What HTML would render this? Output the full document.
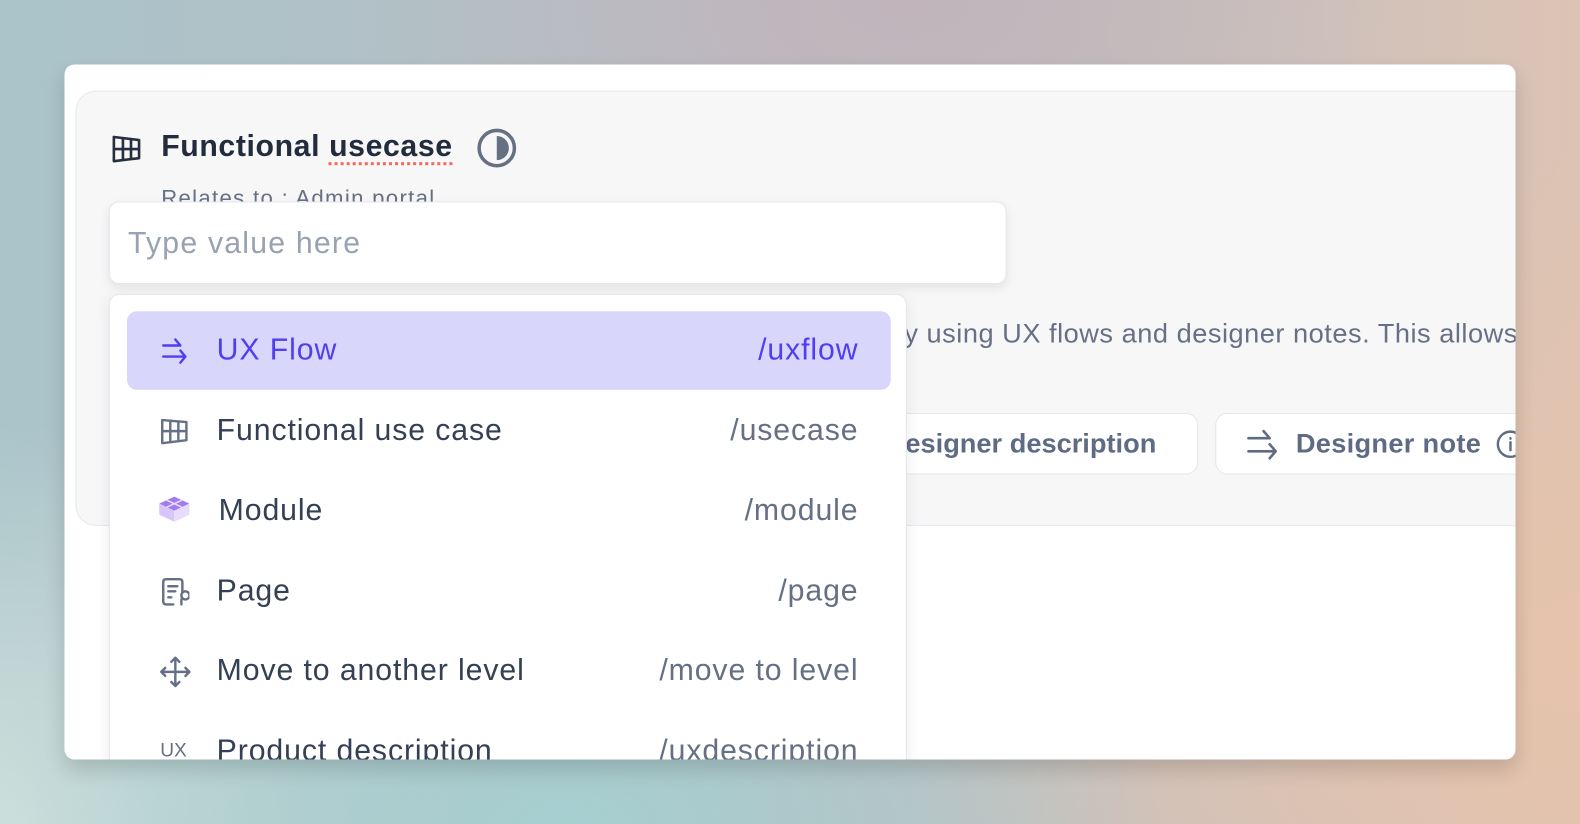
<!DOCTYPE html>
<html><head><meta charset="utf-8"><style>
html,body{margin:0;padding:0;width:1580px;height:824px;overflow:hidden;font-family:"Liberation Sans",sans-serif}
#w{position:absolute;left:0;top:0;width:1568px;height:818px;transform-origin:0 0;transform:scale(1.00765,1.00733);overflow:hidden;
background:
radial-gradient(ellipse 600px 300px at 560px 818px,#a6cfd0 0%,rgba(166,207,208,0) 100%),
radial-gradient(ellipse 700px 500px at 1568px 650px,#e6c3ab 0%,rgba(230,195,171,0) 100%),
radial-gradient(ellipse 500px 400px at 0px 818px,#cfe0dc 0%,rgba(207,224,220,0) 100%),
radial-gradient(ellipse 500px 300px at 900px 0px,#c1b4bb 0%,rgba(193,180,187,0) 100%),
linear-gradient(90deg,#aac4ca 0%,#b9bdc3 50%,#cdc2bc 80%,#dcc3b4 100%);}
.card{position:absolute;left:64px;top:64px;width:1440px;height:690px;background:#fff;border-radius:10px;overflow:hidden;box-shadow:0 10px 20px rgba(0,0,0,.15)}
.panel{position:absolute;left:11px;top:26px;width:1460px;height:430px;background:#f7f7f8;border:1.5px solid #e4e7ec;border-radius:20px 0 0 20px}
.abs{position:absolute;white-space:nowrap}
.row{position:absolute;left:17px;width:758px;height:78px}
.row .t{position:absolute;left:89px;top:0;line-height:78px;font-size:30px;color:#344054;letter-spacing:0.9px}
.row .s{position:absolute;right:32px;top:0;line-height:78px;font-size:30px;color:#667085;letter-spacing:0.9px}
.row svg{position:absolute;left:32px;top:24px}
</style></head><body><div id="w">
<div class="card">
 <div class="panel"></div>
 <svg class="abs" style="left:46px;top:68px" width="32" height="32" viewBox="0 0 32 32" fill="none" stroke="#262f40" stroke-width="2.6" stroke-linejoin="round"><path d="M3 4 L28 7 L28 25 L3 28 Z M12 5 L12 27 M20 6 L20 26 M3 16 L28 16"/></svg>
 <div class="abs" style="left:96px;top:62px;font-size:30px;font-weight:bold;color:#232c3d;line-height:40px;letter-spacing:0.6px">Functional <span style="text-decoration:underline dotted #f26b5b 3px;text-underline-offset:6px">usecase</span></div>
 <svg class="abs" style="left:409px;top:63px" width="40" height="40" viewBox="0 0 40 40"><circle cx="20" cy="20" r="17.5" fill="none" stroke="#667085" stroke-width="3.5"/><path d="M20 8 A12 12 0 0 1 20 32 Z" fill="#667085"/></svg>
 <div class="abs" style="left:96px;top:120px;font-size:22px;color:#667085;letter-spacing:1.3px">Relates to : Admin portal</div>
 <div class="abs" style="left:818px;top:252px;font-size:27px;color:#667085;letter-spacing:0.5px">by using UX flows and designer notes. This allows</div>
 <div class="abs" style="left:700px;top:346px;width:423px;height:59px;border:1.5px solid #e4e7ec;border-radius:12px;background:#fff"></div>
 <div class="abs" style="left:815px;top:358px;font-size:27px;color:#5f6b85;font-weight:bold;line-height:36px">Designer description</div>
 <div class="abs" style="left:1142px;top:346px;width:340px;height:59px;border:1.5px solid #e4e7ec;border-radius:12px;background:#fff"></div>
 <svg class="abs" style="left:1172px;top:360px" width="34" height="34" viewBox="0 0 34 34" fill="none" stroke="#5f6b85" stroke-width="2.6" stroke-linecap="round" stroke-linejoin="round"><path d="M3 11 H24 M18 4 L24 11 M3 24 H30 M24 17 L30 24 L24 31"/></svg>
 <div class="abs" style="left:1222px;top:358px;font-size:27px;color:#5f6b85;font-weight:bold;line-height:36px;letter-spacing:0.3px">Designer note</div>
 <svg class="abs" style="left:1420px;top:362px" width="30" height="30" viewBox="0 0 30 30" fill="none" stroke="#5f6b85" stroke-width="2.4"><circle cx="15" cy="15" r="12.5"/><path d="M15 13 V21 M15 9 V9.5" stroke-linecap="round"/></svg>
 <div class="abs" style="left:44px;top:136px;width:889px;height:80px;background:#fff;border:1.5px solid #e4e7ec;border-radius:10px;box-shadow:0 4px 10px rgba(0,0,0,.08)"></div>
 <div class="abs" style="left:63px;top:158px;font-size:30px;color:#98a2b3;line-height:40px;letter-spacing:1.2px">Type value here</div>
 <div class="abs" style="left:44px;top:228px;width:790px;height:500px;background:#fff;border:1.5px solid #e4e7ec;border-radius:10px;box-shadow:0 4px 14px rgba(0,0,0,.08)">
  <div class="row" style="top:16px;background:#d9d6fb;border-radius:10px">
   <svg width="30" height="30" viewBox="0 0 30 30" fill="none" stroke="#4f3ff0" stroke-width="2.4" stroke-linecap="round" stroke-linejoin="round"><path d="M4 10 H21 M16 4 L21 10 M4 21 H26 M21 15 L26 21 L21 27"/></svg>
   <div class="t" style="color:#4f3ff0">UX Flow</div><div class="s" style="color:#4f3ff0">/uxflow</div></div>
  <div class="row" style="top:96px">
   <svg width="30" height="30" viewBox="0 0 30 30" fill="none" stroke="#667085" stroke-width="2.4" stroke-linejoin="round"><path d="M3 4 L27 6 L27 24 L3 27 Z M11 5 L11 26 M19 5.5 L19 25 M3 15 L27 15"/></svg>
   <div class="t">Functional use case</div><div class="s">/usecase</div></div>
  <div class="row" style="top:175px">
   <svg width="34" height="30" viewBox="0 0 34 30" style="left:30px;top:22px"><path d="M17 3 L32 10 L17 17 L2 10 Z" fill="#a37bf0"/><path d="M2 10 L17 17 L17 28 L2 21 Z" fill="#d7c6fb"/><path d="M32 10 L17 17 L17 28 L32 21 Z" fill="#e7dcfd"/><path d="M9.5 6.5 L24.5 13.5 M24.5 6.5 L9.5 13.5" stroke="#e8dcff" stroke-width="1.5"/></svg>
   <div class="t" style="left:91px">Module</div><div class="s">/module</div></div>
  <div class="row" style="top:255px">
   <svg width="30" height="32" viewBox="0 0 30 32" fill="none" stroke="#667085" stroke-width="2.4" stroke-linecap="round" stroke-linejoin="round"><path d="M14 28 H7 Q4 28 4 25 V6 Q4 3 7 3 H20 Q23 3 23 6 V16 M9 10 H18 M9 15 H16 M9 21 H12"/><path d="M22 19 a4 4 0 1 1 0 .1 M22 28 L22 23" /></svg>
   <div class="t">Page</div><div class="s">/page</div></div>
  <div class="row" style="top:334px">
   <svg width="32" height="32" viewBox="0 0 32 32" fill="none" stroke="#667085" stroke-width="2.4" stroke-linecap="round" stroke-linejoin="round"><path d="M16 2 V30 M2 16 H30 M12 6 L16 2 L20 6 M12 26 L16 30 L20 26 M6 12 L2 16 L6 20 M26 12 L30 16 L26 20"/></svg>
   <div class="t">Move to another level</div><div class="s">/move to level</div></div>
  <div class="row" style="top:414px">
   <div class="abs" style="left:33px;top:0;line-height:78px;font-size:19px;color:#667085">UX</div>
   <div class="t">Product description</div><div class="s">/uxdescription</div></div>
 </div>
</div>
</div></body></html>
